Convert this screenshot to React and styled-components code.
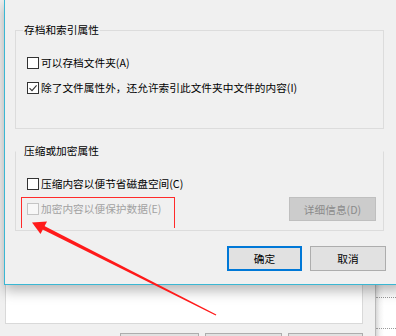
import React from 'react';
import styled, { createGlobalStyle } from 'styled-components';

const GlobalStyle = createGlobalStyle`
    html, body {
        margin: 0;
        padding: 0;
        background: #f0f0f0;
        overflow: hidden;
    }
    body {
        font-family: "Noto Sans CJK SC", "Noto Sans", sans-serif;
        font-size: 10.7px;
        color: #000;
    }
`;

const Desktop = styled.div`
    position: relative;
    width: 396px;
    height: 336px;
    overflow: hidden;
    background: #f0f0f0;
`;

/* window behind the dialog */
const BackWindow = styled.div`
    position: absolute;
    left: 0;
    top: 0;
    width: 396px;
    height: 336px;
    display: flex;
`;

const BackMain = styled.div`
    width: 370px;
    padding-left: 5px;
    display: flex;
    flex-direction: column;
    justify-content: flex-end;
`;

const WhitePanel = styled.div`
    width: 356px;
    height: 130px;
    background: #fff;
    border: 1px solid #d9d9d9;
    border-top: none;
`;

const BackButtons = styled.div`
    display: flex;
    gap: 6px;
    padding: 9px 0 0 115px;
    height: 3px;
`;

const BackButton = styled.div`
    width: ${(p) => p.w}px;
    height: 20px;
    background: #e1e1e1;
    border: 1px solid #adadad;
`;

const SidePane = styled.div`
    flex: 1;
    background: linear-gradient(to right, #9c9c9c 0, #d8d8d8 1px, #f4f4f4 5px, #fff 9px);
    display: flex;
    flex-direction: column;
    padding-top: 297px;
    gap: 30px;
`;

const Dotted = styled.div`
    margin-left: 1px;
    border-top: 1px dotted #9a9a9a;
`;

const Dialog = styled.div`
    position: absolute;
    left: 4px;
    top: -1px;
    width: 400px;
    box-sizing: border-box;
    background: #f0f0f0;
    border: 1px solid #3ab7d3;
    box-shadow: 0 6px 12px rgba(0, 0, 0, 0.28);
    padding: 30px 17px 13px 10px;
    display: flex;
    flex-direction: column;
`;

const Group = styled.div`
    position: relative;
    margin-right: 2px;
    border: 1px solid #dcdcdc;
    border-top-color: ${(p) => (p.hideTop ? '#f0f0f0' : '#dcdcdc')};
    padding: ${(p) => p.pad};
    display: flex;
    flex-direction: column;
    gap: ${(p) => p.gap}px;
    height: ${(p) => p.h}px;
    box-sizing: border-box;
`;

const GroupTitle = styled.span`
    position: absolute;
    left: 7px;
    top: -9px;
    padding: 0 1px;
    background: #f0f0f0;
    line-height: 16px;
`;

const Row = styled.div`
    display: flex;
    align-items: center;
    justify-content: space-between;
    height: ${(p) => p.h || 16}px;
`;

const Check = styled.label`
    display: flex;
    align-items: center;
    gap: 2px;
    color: ${(p) => (p.disabled ? '#a2a2a2' : '#000')};
    white-space: nowrap;
    line-height: 16px;
`;

const Box = styled.span`
    width: 10px;
    height: 10px;
    border: 1px solid ${(p) => (p.disabled ? '#c4c4c4' : '#333')};
    background: ${(p) => (p.disabled ? '#f7f7f7' : '#fff')};
    display: flex;
    align-items: center;
    justify-content: center;
`;

const Button = styled.div`
    width: ${(p) => p.w}px;
    height: ${(p) => p.h}px;
    box-sizing: border-box;
    display: flex;
    align-items: center;
    justify-content: center;
    background: ${(p) => (p.disabled ? '#cccccc' : '#e1e1e1')};
    border: ${(p) => (p.primary ? '2px solid #0078d7' : p.disabled ? '1px solid #bfbfbf' : '1px solid #adadad')};
    color: ${(p) => (p.disabled ? '#8a8a8a' : '#000')};
`;

const Footer = styled.div`
    display: flex;
    justify-content: flex-end;
    gap: 8px;
    margin-top: 15px;
`;

const Highlight = styled.div`
    position: absolute;
    left: 21px;
    top: 197px;
    width: 152px;
    height: 30px;
    border: 1px solid #ff2a2a;
    border-bottom: none;
`;

const Overlay = styled.svg`
    position: absolute;
    left: 0;
    top: 0;
    pointer-events: none;
`;

function CheckItem({ label, checked, disabled }) {
    return (
        <Check disabled={disabled}>
            <Box disabled={disabled}>
                {checked && (
                    <svg width="10" height="10" viewBox="0 0 10 10">
                        <path d="M1.5 5.2 L4 7.6 L8.6 2.4" fill="none" stroke="#333" strokeWidth="1.1" />
                    </svg>
                )}
            </Box>
            {label}
        </Check>
    );
}

export default function App() {
    return (
        <>
            <GlobalStyle />
            <Desktop>
                <BackWindow>
                    <BackMain>
                        <WhitePanel />
                        <BackButtons>
                            <BackButton w={77} />
                            <BackButton w={75} />
                            <BackButton w={73} />
                        </BackButtons>
                    </BackMain>
                    <SidePane>
                        <Dotted />
                        <Dotted />
                    </SidePane>
                </BackWindow>

                <Dialog>
                    <Group h={99} pad="24px 0 0 11px" gap={9}>
                        <GroupTitle>存档和索引属性</GroupTitle>
                        <Row>
                            <CheckItem label="可以存档文件夹(A)" />
                        </Row>
                        <Row>
                            <CheckItem checked label="除了文件属性外，还允许索引此文件夹中文件的内容(I)" />
                        </Row>
                    </Group>

                    <Group hideTop h={80} pad="24px 7px 0 11px" gap={5} style={{ marginTop: 22 }}>
                        <GroupTitle>压缩或加密属性</GroupTitle>
                        <Row>
                            <CheckItem label="压缩内容以便节省磁盘空间(C)" />
                        </Row>
                        <Row h={24}>
                            <CheckItem disabled label="加密内容以便保护数据(E)" />
                            <Button disabled w={87} h={24}>详细信息(D)</Button>
                        </Row>
                    </Group>

                    <Footer>
                        <Button primary w={75} h={25}>确定</Button>
                        <Button w={76} h={25}>取消</Button>
                    </Footer>
                </Dialog>

                <Highlight />
                <Overlay width="396" height="336" viewBox="0 0 396 336">
                    <polygon points="42.9,225.2 41.1,228.8 215.7,315.6 216.3,314.4" fill="#ff1a1a" />
                    <polygon points="32,222.5 47,221.5 40.5,234" fill="#ff1a1a" />
                </Overlay>
            </Desktop>
        </>
    );
}
